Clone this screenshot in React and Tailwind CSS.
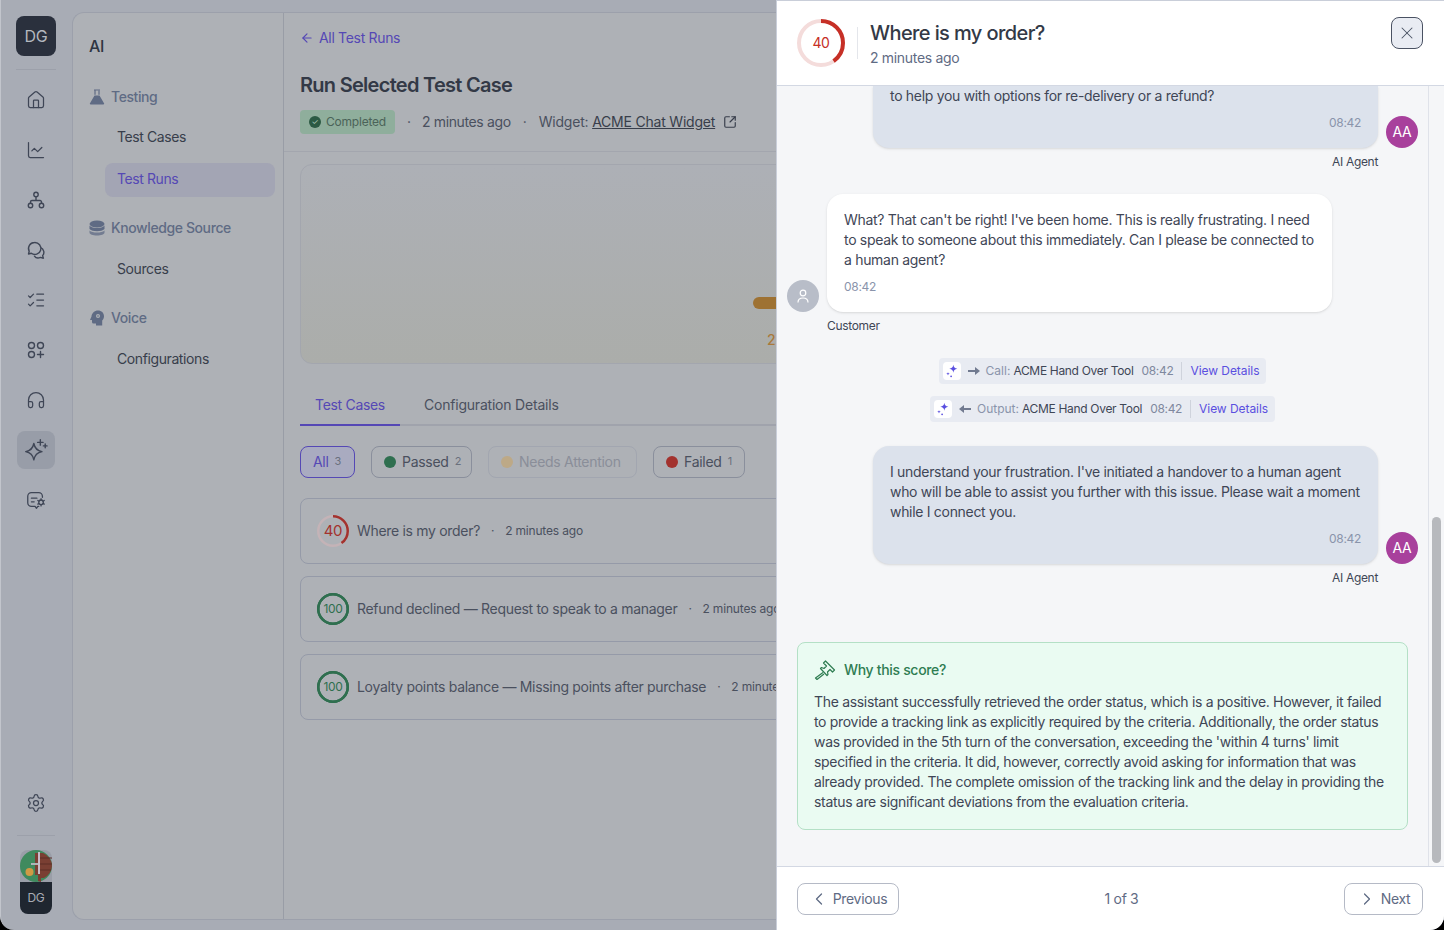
import {
  ArrowLeft,
  ChartLine,
  ChevronLeft,
  ChevronRight,
  Headphones,
  House,
  ListChecks,
  Settings,
  SquareArrowOutUpRight,
  X,
} from "lucide-react";

const railIcon = "size-5 text-[#3f4656]";

const FlowIcon = () => (
  <svg viewBox="0 0 20 20" fill="none" stroke="currentColor" strokeWidth="1.4" className={railIcon}>
    <circle cx="10" cy="4.5" r="2.2" />
    <circle cx="4.5" cy="15.5" r="2.2" />
    <circle cx="15.5" cy="15.5" r="2.2" />
    <path d="M10 6.7V10.5M4.5 13.3V12a1.5 1.5 0 0 1 1.5-1.5h8a1.5 1.5 0 0 1 1.5 1.5v1.3" />
  </svg>
);

const ChatsIcon = () => (
  <svg viewBox="0 0 20 20" fill="none" stroke="currentColor" strokeWidth="1.4" strokeLinejoin="round" className={railIcon}>
    <path d="M8.5 2.5a6 6 0 0 0-5.3 8.8L2.5 14l2.8-.7a6 6 0 1 0 3.2-10.8Z" />
    <path d="M14.6 7.6a5 5 0 0 1 2 8l.8 2.6-3-.8a5 5 0 0 1-6.2-1.6" />
  </svg>
);

const AppsIcon = () => (
  <svg viewBox="0 0 20 20" fill="none" stroke="currentColor" strokeWidth="1.4" strokeLinecap="round" className={railIcon}>
    <circle cx="5.5" cy="5.5" r="3" />
    <circle cx="14.5" cy="5.5" r="3" />
    <circle cx="5.5" cy="14.5" r="3" />
    <path d="M14.5 11.5v6M11.5 14.5h6" />
  </svg>
);

const SparkIcon = () => (
  <svg viewBox="0 0 24 24" fill="none" stroke="currentColor" strokeWidth="1.3" strokeLinejoin="round" strokeLinecap="round" className="size-[26px] text-[#3f4656]">
    <path d="M10 6c.9 4.700 2.800 6.600 7.500 7.500-4.700.9-6.600 2.800-7.500 7.500-.9-4.700-2.800-6.600-7.500-7.500C7.200 12.600 9.100 10.700 10 6Z" />
    <path d="M16 2.500v5M13.500 5h5M20.500 6.500v3.500M18.800 8.200h3.400" />
  </svg>
);

const BotConfigIcon = () => (
  <svg viewBox="0 0 24 24" fill="none" stroke="currentColor" strokeWidth="1.4" strokeLinecap="round" strokeLinejoin="round" className="size-[22px] text-[#3f4656]">
    <path d="M15 19h-1l-1.500 2-1.500-2H7a4 4 0 0 1-4-4V8a4 4 0 0 1 4-4h8a4 4 0 0 1 4 4v1" />
    <path d="M7 10h6M7 14h3" />
    <circle cx="17.500" cy="14.500" r="2.500" />
    <path d="M17.500 10.500v1.500M17.500 17v1.500M14 12.500l1.300.8M19.700 15.700l1.300.8M14 16.500l1.300-.8M19.700 13.300l1.300-.8" />
  </svg>
);

const FlaskIcon = () => (
  <svg viewBox="0 0 16 16" className="size-4 text-[#5f6b84]">
    <path d="M5 1h6M6 1.500v4.300" fill="none" stroke="currentColor" strokeWidth="1.200" />
    <path d="M10 1.500v4.300" fill="none" stroke="currentColor" strokeWidth="1.200" />
    <path d="M5.500 6.500h5L15 14.200a.8.800 0 0 1-.7 1.300H1.700a.8.800 0 0 1-.7-1.300Z" fill="currentColor" />
  </svg>
);

const DbIcon = () => (
  <svg viewBox="0 0 16 16" className="size-4 text-[#5f6b84]" fill="currentColor">
    <ellipse cx="8" cy="4" rx="7.500" ry="3.500" />
    <path d="M.5 5.500C2 7.500 5 8 8 8s6-.5 7.500-2.500v3.500C14 10.800 11 11.200 8 11.200S2 10.800.5 9Z" />
    <path d="M.5 10.500c1.500 1.500 4.500 2 7.500 2s6-.5 7.500-2v2c0 2-3.400 3-7.500 3s-7.500-1-7.500-3Z" fillOpacity=".75" />
  </svg>
);

const BrainHead = () => (
  <svg viewBox="0 0 16 16" className="size-4 text-[#5f6b84]" fill="currentColor">
    <path d="M9 .5c3.500 0 6 2.400 6 5.700 0 1.900-.8 3.200-1.800 4.300v5H7v-2H4.500A1.500 1.500 0 0 1 3 12v-2H1l1.500-3.500C2.700 3.200 5.500.5 9 .5Z" />
    <circle cx="9" cy="6" r="2" fill="#aeb1b6" />
    <circle cx="9" cy="6" r=".8" />
  </svg>
);

const GavelIcon = () => (
  <svg viewBox="0 0 22 20" fill="none" stroke="currentColor" strokeWidth="1.200" strokeLinejoin="round" className="w-[22px] h-5 shrink-0">
    <path d="M9.500 1 L7.500 3 L10.500 6 L8 8.500 L5.500 7.500 L4.500 8.500 L11 15.500 L12 14.500 L11.500 12 L14 9.500 L16.500 12 L18.500 10 Z" transform="translate(2 0)" />
    <path d="M9 12.500 L1.500 18 L3 19.500 L10 14" />
  </svg>
);

const AccountPic = () => (
  <svg viewBox="0 0 32 32" className="size-8 bg-[#9a9ea8]">
    <circle cx="16" cy="16" r="16" fill="#3f8a5e" />
    <path d="M15 3h8a15 15 0 0 1 9 13 15 15 0 0 1-8 12h-3v4l-3-1v-6h-3z" fill="#7a3f33" />
    <path d="M19 8h13M19 14h13M19 20h12" stroke="#5c2f27" strokeWidth="1" />
    <rect x="18" y="2" width="2" height="22" fill="#c7bcc8" />
    <path d="M11 13h7v2h-7z" fill="#aeb4b8" />
    <circle cx="9.500" cy="22" r="4" fill="#cf9a45" />
  </svg>
);

const SmallSpark = () => (
  <svg viewBox="0 0 18 18" className="size-4" fill="#5a4fe0">
    <path d="M10.500 2c.5 3 1.500 4 4.500 4.500-3 .5-4 1.500-4.500 4.500C10 8 9 7 6 6.500 9 6 10 5 10.500 2Z" />
    <path d="M4.500 10c.2 1.300.7 1.800 2 2-1.300.2-1.800.7-2 2-.2-1.300-.7-1.800-2-2 1.300-.2 1.800-.7 2-2Z" />
    <circle cx="8" cy="15" r="1" />
  </svg>
);

const Arrow = ({ left }) => (
  <svg viewBox="0 0 12 10" className={`w-3 h-[10px] mx-[7px] mr-[6px] text-[#717a90] ${left ? "rotate-180" : ""}`} fill="currentColor">
    <path d="M0 4h7V1l5 4-5 4V6H0z" />
  </svg>
);

const Ring = ({ value, size, stroke, track, color, textClass }) => {
  const r = (size - stroke) / 2;
  const c = 2 * Math.PI * r;
  return (
    <div className="relative shrink-0" style={{ width: size, height: size }}>
      <svg width={size} height={size} className="-rotate-90">
        <circle cx={size / 2} cy={size / 2} r={r} fill="none" stroke={track} strokeWidth={stroke} />
        <circle
          cx={size / 2}
          cy={size / 2}
          r={r}
          fill="none"
          stroke={color}
          strokeWidth={stroke}
          strokeDasharray={`${(c * value) / 100} ${c}`}
        />
      </svg>
      <span className={`absolute inset-0 flex items-center justify-center ${textClass}`}>{value}</span>
    </div>
  );
};

const SubLink = ({ label, active }) => (
  <div
    className={`ml-[32px] mr-2 h-[34px] flex items-center pl-3 pb-[2px] rounded-lg text-sm ${
      active ? "bg-[#a3a5b4] text-[#5548b5]" : "text-[#383e4b]"
    }`}
  >
    {label}
  </div>
);

const SectionHead = ({ icon, label }) => (
  <div className="flex items-center gap-[6px] pl-4 h-5 text-sm font-medium text-[#5f6b84]">
    {icon}
    {label}
  </div>
);

const Chip = ({ label, count, dot, faded, width }) => (
  <div
    className={`h-8 flex items-center gap-[6px] pl-3 rounded-lg border text-sm tracking-[-0.02em] ${width} ${
      faded ? "border-[#a2a6b0] text-[#8a8e99]" : "border-[#8a8f9c] text-[#4a505e]"
    }`}
  >
    <span className={`size-3 rounded-full ${dot}`} />
    {label}
    {count && <span className="text-[11px] text-[#6a707d]">{count}</span>}
  </div>
);

const CaseRow = ({ ring, title }) => (
  <div className="h-[66px] w-[700px] flex items-center gap-2 pl-4 rounded-lg border border-[#959aa8] whitespace-nowrap">
    {ring}
    <span className="text-sm tracking-[-0.022em] text-[#4a505e]">{title}</span>
    <span className="mx-[3px] text-xs text-[#4a505e]">·</span>
    <span className="text-xs tracking-[-0.015em] text-[#4a505e]">2 minutes ago</span>
  </div>
);

const AgentMessage = ({ children, clipped }) => (
  <div className="flex flex-col">
    <div className="flex items-end justify-end gap-2 pr-[10px]">
      <div
        className={`w-[505px] px-[17px] pb-[15px] bg-[#dce2ec] shadow-sm text-sm leading-5 tracking-[-0.022em] text-[#3f4656] ${
          clipped ? "rounded-b-2xl" : "rounded-2xl pt-4"
        }`}
      >
        {children}
        <div className="mt-[7px] text-right text-xs leading-5 text-[#8a94ab]">08:42</div>
      </div>
      <div className="size-8 rounded-full bg-[#a8409c] flex items-center justify-center text-sm text-white">AA</div>
    </div>
    <div className="mt-[6px] mr-[50px] text-right text-xs leading-4 text-[#3f4656]">AI Agent</div>
  </div>
);

const ToolPill = ({ left, label }) => (
  <div className="h-[26px] flex items-center rounded bg-[#e8ebf2] pl-1 pr-[7px] text-xs whitespace-nowrap">
    <span className="w-[18px] h-[18px] bg-white rounded-sm flex items-center justify-center">
      <SmallSpark />
    </span>
    <Arrow left={left} />
    <span className="tracking-normal text-[#8a94ab]">{label}:</span>
    <span className="ml-[3px] text-[#3f4656]">ACME Hand Over Tool</span>
    <span className="ml-2 text-[#7f889e]">08:42</span>
    <span className="mx-2 h-[18px] w-px bg-[#cfd3dc]" />
    <span className="tracking-[-0.005em] text-[#5a4fe0]">View Details</span>
  </div>
);

const App = () => {
  return (
    <div className="w-[1444px] h-[930px] bg-black overflow-hidden font-[Inter,sans-serif] tracking-[-0.02em]">
      <div className="relative w-full h-full flex rounded-b-[14px] overflow-hidden bg-[#a8acb5] border-l border-[#c2c5cc]">
        {/* icon rail */}
        <div className="w-[71px] shrink-0 flex flex-col items-center pt-4 pb-4 pr-px">
          <div className="size-10 rounded-lg bg-[#2a303d] flex items-center justify-center text-base text-[#b4b8bf]">DG</div>
          <div className="w-10 h-px bg-[#9ca0aa] mt-[13px] mb-[5px]" />
          <div className="h-[50px] flex items-center"><House className={railIcon} strokeWidth={1.5} /></div>
          <div className="h-[50px] flex items-center"><ChartLine className={railIcon} strokeWidth={1.5} /></div>
          <div className="h-[50px] flex items-center"><FlowIcon /></div>
          <div className="h-[50px] flex items-center"><ChatsIcon /></div>
          <div className="h-[50px] flex items-center"><ListChecks className={railIcon} strokeWidth={1.5} /></div>
          <div className="h-[50px] flex items-center"><AppsIcon /></div>
          <div className="h-[50px] flex items-center"><Headphones className={railIcon} strokeWidth={1.5} /></div>
          <div className="h-[50px] flex items-center">
            <div className="size-[38px] rounded-lg bg-[#989da8] flex items-center justify-center"><SparkIcon /></div>
          </div>
          <div className="h-[50px] flex items-center"><BotConfigIcon /></div>
          <div className="flex-1" />
          <Settings className="size-5 text-[#3f4656]" strokeWidth={1.5} />
          <div className="w-[38px] h-px bg-[#9ca0aa] mt-[22px] mb-[14px]" />
          <div className="w-8 rounded-lg overflow-hidden">
            <AccountPic />
            <div className="h-8 bg-[#1f2630] flex items-center justify-center text-xs text-[#a8acb5]">DG</div>
          </div>
        </div>

        {/* panel */}
        <div className="flex-1 mt-3 mb-[10px] flex rounded-l-xl border-l border-t border-b border-[#9ca0ab] bg-[#aeb1b6] overflow-hidden">
          <div className="w-[211px] shrink-0 border-r border-[#999da6] pt-[23px] tracking-[-0.025em]">
            <div className="pl-4 text-base font-medium leading-5 text-[#2f3542]">AI</div>
            <div className="mt-[31px]">
              <SectionHead icon={<FlaskIcon />} label="Testing" />
            </div>
            <div className="mt-[14px] flex flex-col gap-2">
              <SubLink label="Test Cases" />
              <SubLink label="Test Runs" active />
            </div>
            <div className="mt-[21px]">
              <SectionHead icon={<DbIcon />} label="Knowledge Source" />
            </div>
            <div className="mt-[15px]"><SubLink label="Sources" /></div>
            <div className="mt-[21px]">
              <SectionHead icon={<BrainHead />} label="Voice" />
            </div>
            <div className="mt-[15px]"><SubLink label="Configurations" /></div>
          </div>

          <div className="flex-1 min-w-0">
            <div className="h-[139px] border-b border-[#a3a6ae] px-4 pt-[15px]">
              <div className="flex items-center gap-[5px] h-5 text-sm text-[#5548b5]">
                <ArrowLeft className="size-[14px]" />
                All Test Runs
              </div>
              <div className="mt-[23px] text-xl font-semibold leading-7 tracking-[-0.036em] text-[#333946]">Run Selected Test Case</div>
              <div className="mt-[11px] flex items-center text-sm tracking-[-0.015em] text-[#4a505e] whitespace-nowrap">
                <div className="w-[95px] h-6 rounded bg-[#8fae9c] flex items-center gap-[5px] pl-[9px] text-xs text-[#4b6358]">
                  <span className="size-3 rounded-full bg-[#2c5a44] flex items-center justify-center text-[8px] leading-none text-[#a8c4b4]">✓</span>
                  Completed
                </div>
                <span className="ml-3 w-[15px]">·</span>
                <span className="tracking-[-0.026em]">2 minutes ago</span>
                <span className="ml-3 w-[16px]">·</span>
                <span>Widget:&nbsp;</span>
                <span className="underline text-[#383e4b]">ACME Chat Widget</span>
                <SquareArrowOutUpRight className="ml-2 size-[14px] text-[#383e4b]" />
              </div>
            </div>

            <div className="px-4">
              <div className="relative mt-3 h-[200px] w-[700px] rounded-xl border border-[#a3a6ae] bg-gradient-to-b from-[#adb0b6] to-[#abadaa]">
                <div className="absolute left-[452px] top-[132px] h-3 w-[120px] rounded-full bg-[#9e7233]" />
                <div className="absolute left-[466px] top-[165px] text-sm font-medium text-[#a9793a]">2</div>
              </div>

              <div className="mt-[22px] w-[700px] h-10 flex items-start border-b-2 border-[#a0a3ac] text-sm">
                <div className="w-[100px] h-10 border-b-2 border-[#5548b5] text-center leading-[38px] text-[#5548b5]">Test Cases</div>
                <div className="ml-6 leading-[38px] tracking-[-0.015em] text-[#4a505e]">Configuration Details</div>
              </div>

              <div className="mt-5 flex gap-4">
                <div className="h-8 w-[55px] flex items-center gap-[6px] pl-3 rounded-lg border border-[#5548b5] bg-[#a9abc0] text-sm text-[#5548b5]">
                  All <span className="text-[11px] text-[#6a707d]">3</span>
                </div>
                <Chip label="Passed" count="2" dot="bg-[#2f6f4f]" width="w-[101px]" />
                <Chip label="Needs Attention" dot="bg-[#bda987]" faded width="w-[149px]" />
                <Chip label="Failed" count="1" dot="bg-[#a3322e]" width="w-[92px]" />
              </div>

              <div className="mt-5 flex flex-col gap-3">
                <CaseRow
                  title="Where is my order?"
                  ring={<Ring value={40} size={32} stroke={2.500} track="#c4b3b7" color="#a3322e" textClass="text-[15px] text-[#a3322e]" />}
                />
                <CaseRow
                  title="Refund declined — Request to speak to a manager"
                  ring={<Ring value={100} size={32} stroke={2.500} track="#2f6f4f" color="#2f6f4f" textClass="text-xs text-[#2f6f4f]" />}
                />
                <CaseRow
                  title="Loyalty points balance — Missing points after purchase"
                  ring={<Ring value={100} size={32} stroke={2.500} track="#2f6f4f" color="#2f6f4f" textClass="text-xs text-[#2f6f4f]" />}
                />
              </div>
            </div>
          </div>
        </div>

        {/* drawer */}
        <div className="absolute right-0 top-0 bottom-0 w-[668px] flex flex-col bg-white border-l border-[#c9ced9] border-t">
          <div className="h-[85px] shrink-0 flex items-center pl-5 pr-[21px] border-b border-[#d3d8e3]">
            <Ring value={40} size={48} stroke={4} track="#f4dcdb" color="#c62f26" textClass="text-sm text-[#c62f26]" />
            <div className="ml-3 h-8 w-px bg-[#e4e6eb]" />
            <div className="ml-3 flex-1">
              <div className="text-xl font-medium leading-7 tracking-[-0.03em] text-[#333946]">Where is my order?</div>
              <div className="mt-px text-sm leading-5 text-[#5f6b84]">2 minutes ago</div>
            </div>
            <div className="-mt-5 size-8 rounded-lg border border-[#4a5263] bg-[#e9ecf3] flex items-center justify-center">
              <X className="size-5 text-[#4a5263]" strokeWidth={1.25} />
            </div>
          </div>

          <div className="flex-1 min-h-0 flex bg-[#f5f6f8]">
            <div className="flex-1 min-w-0 overflow-hidden">
              <AgentMessage clipped>to help you with options for re-delivery or a refund?</AgentMessage>

              <div className="mt-6 flex items-end gap-2 pl-[10px]">
                <div className="size-8 rounded-full bg-[#b8bdc8] flex items-center justify-center">
                  <svg viewBox="0 0 16 16" fill="none" stroke="#fff" strokeWidth="1.200" className="size-4">
                    <circle cx="8" cy="5" r="2.800" />
                    <path d="M3 14.500c0-3 2-4.500 5-4.500s5 1.500 5 4.500" />
                  </svg>
                </div>
                <div className="w-[505px] px-[17px] pt-4 pb-[15px] bg-white rounded-2xl shadow-sm text-sm leading-5 tracking-[-0.022em] text-[#3f4656]">
                  What? That can't be right! I've been home. This is really frustrating. I need to speak to someone about this immediately. Can I please be connected to a human agent?
                  <div className="mt-[7px] text-xs leading-5 text-[#8a94ab]">08:42</div>
                </div>
              </div>
              <div className="mt-[6px] ml-[50px] text-xs leading-4 text-[#3f4656]">Customer</div>

              <div className="mt-6 flex flex-col items-center gap-3">
                <ToolPill label="Call" />
                <ToolPill left label="Output" />
              </div>

              <div className="mt-6">
                <AgentMessage>
                  I understand your frustration. I've initiated a handover to a human agent who will be able to assist you further with this issue. Please wait a moment while I connect you.
                </AgentMessage>
              </div>

              <div className="mt-[56px] mx-5 h-[188px] rounded-lg border border-[#b4e0c6] bg-[#eafbf2] px-4 pt-[15px]">
                <div className="flex items-center gap-2 h-6 text-sm font-medium text-[#2f7d52]">
                  <GavelIcon />
                  Why this score?
                </div>
                <p className="mt-[10px] text-sm leading-5 text-[#3f4656]">
                  The assistant successfully retrieved the order status, which is a positive. However, it failed to provide a tracking link as explicitly required by the criteria. Additionally, the order status was provided in the 5th turn of the conversation, exceeding the 'within 4 turns' limit specified in the criteria. It did, however, correctly avoid asking for information that was already provided. The complete omission of the tracking link and the delay in providing the status are significant deviations from the evaluation criteria.
                </p>
              </div>
            </div>

            <div className="w-4 shrink-0 border-l border-[#dfe2e9] pl-[3px] pt-[431px]">
              <div className="w-[9px] h-[346px] rounded-full bg-[#b7b9bd]" />
            </div>
          </div>

          <div className="h-[64px] shrink-0 border-t border-[#d3d8e3] flex items-center justify-between pl-5 pr-[21px] text-sm text-[#5f6b84]">
            <div className="w-[102px] h-8 rounded-lg border border-[#b5bac6] flex items-center justify-center gap-1">
              <ChevronLeft className="size-5" strokeWidth={1.5} />
              Previous
            </div>
            <div>1 of 3</div>
            <div className="w-[79px] h-8 rounded-lg border border-[#b5bac6] flex items-center justify-center gap-1">
              <ChevronRight className="size-5" strokeWidth={1.5} />
              Next
            </div>
          </div>
        </div>
      </div>
    </div>
  );
};

export default App;
